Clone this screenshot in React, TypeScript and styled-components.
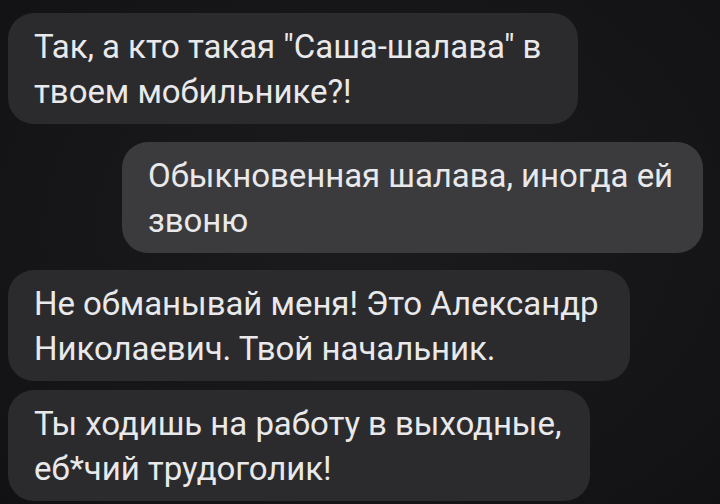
import React from "react";
import styled, { createGlobalStyle } from "styled-components";

const Global = createGlobalStyle`
  html, body {
    margin: 0;
    padding: 0;
    background: #161618;
  }
  body {
    width: 720px;
    height: 504px;
    overflow: hidden;
  }
`;

const Thread = styled.div`
  box-sizing: border-box;
  width: 720px;
  height: 504px;
  padding: 13px 17px 0 8px;
  display: flex;
  flex-direction: column;
  background: radial-gradient(ellipse at 50% 45%, #1b1b1d 0%, #151517 70%, #111113 100%);
  font-family: Roboto, "Noto Sans", sans-serif;
`;

const Bubble = styled.div<{ $out?: boolean; $w: number; $gap: number }>`
  box-sizing: border-box;
  width: ${(p) => p.$w}px;
  align-self: ${(p) => (p.$out ? "flex-end" : "flex-start")};
  margin-top: ${(p) => p.$gap}px;
  padding: 11px 18px 10px 26px;
  border-radius: 26px;
  background: ${(p) => (p.$out ? "#3b3b3d" : "#2b2b2d")};
  color: #e9e9eb;
  font-size: 33px;
  line-height: 45px;
  letter-spacing: -0.05px;
  white-space: nowrap;
`;

const messages = [
  { out: false, w: 570, gap: 0, lines: ['Так, а кто такая "Саша-шалава" в', "твоем мобильнике?!"] },
  { out: true, w: 581, gap: 18, lines: ["Обыкновенная шалава, иногда ей", "звоню"] },
  { out: false, w: 622, gap: 17, lines: ["Не обманывай меня! Это Александр", "Николаевич. Твой начальник."] },
  { out: false, w: 582, gap: 9, lines: ["Ты ходишь на работу в выходные,", "еб*чий трудоголик!"] },
];

export default function App() {
  return (
    <>
      <Global />
      <Thread>
        {messages.map((m, i) => (
          <Bubble key={i} $out={m.out} $w={m.w} $gap={m.gap}>
            {m.lines[0]}
            <br />
            {m.lines[1]}
          </Bubble>
        ))}
      </Thread>
    </>
  );
}
